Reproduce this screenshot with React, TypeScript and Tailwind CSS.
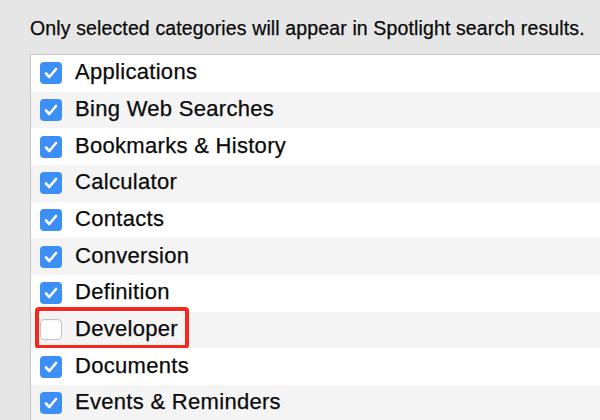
const categories = [
  { name: 'Applications', checked: true },
  { name: 'Bing Web Searches', checked: true },
  { name: 'Bookmarks & History', checked: true },
  { name: 'Calculator', checked: true },
  { name: 'Contacts', checked: true },
  { name: 'Conversion', checked: true },
  { name: 'Definition', checked: true },
  { name: 'Developer', checked: false, highlight: true },
  { name: 'Documents', checked: true },
  { name: 'Events & Reminders', checked: true },
];

function Checkbox({ checked }: { checked: boolean }) {
  if (!checked) {
    return <div className="w-[22px] h-[21px] rounded-[4px] border border-[#c4c4c4] bg-white shadow-[inset_0_1px_1px_rgba(0,0,0,0.04)]" />;
  }
  return (
    <div className="w-[22px] h-[22px] rounded-[4px] bg-[#3b8ff6] flex items-center justify-center">
      <svg width="14" height="12" viewBox="0 0 14 12" fill="none">
        <path d="M2 6.5 L5.3 10 L12 2" stroke="white" strokeWidth="2.6" strokeLinecap="round" strokeLinejoin="round" />
      </svg>
    </div>
  );
}

export default function App() {
  return (
    <div className="w-[600px] h-[420px] overflow-hidden bg-[#e6e6e6] pl-[30px] font-['Liberation_Sans',Arial,sans-serif] text-[#0a0a0a] [-webkit-text-stroke:0.25px_#0a0a0a]">
      <p className="pt-[16px] h-[54px] text-[19.5px] leading-[24px] tracking-[0.13px]">
        Only selected categories will appear in Spotlight search results.
      </p>
      <div className="border-t border-l border-[#c6c6c6] bg-white">
        {categories.map((c, i) => (
          <div
            key={c.name}
            className={`relative flex items-center gap-[13px] h-[36.67px] pl-[9px] ${i % 2 === 1 ? 'bg-[#f4f4f4]' : 'bg-white'}`}
          >
            <Checkbox checked={c.checked} />
            <span className="text-[22px] leading-none tracking-[0.3px] -mt-[2px]">{c.name}</span>
            {c.highlight && (
              <div className="absolute left-[4px] top-[-5px] w-[154px] h-[42px] border-4 border-[#f5281b] rounded-[4px]" />
            )}
          </div>
        ))}
      </div>
    </div>
  );
}
